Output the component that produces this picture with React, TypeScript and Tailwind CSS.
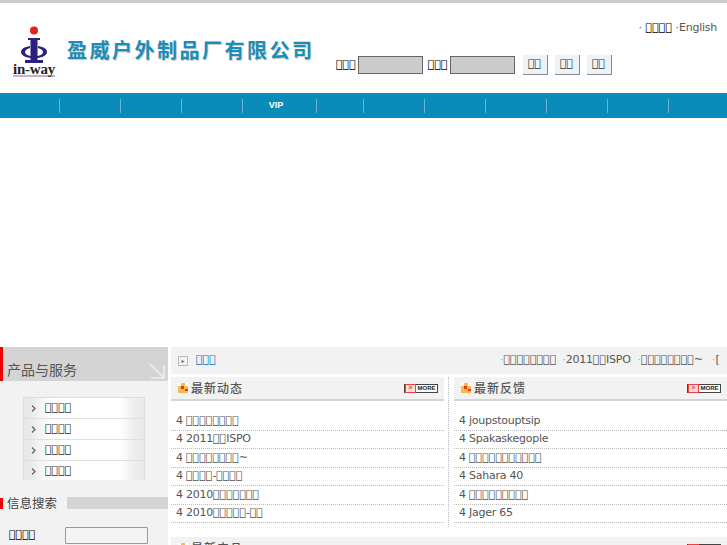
const cjk = '"Noto Sans CJK SC", sans-serif'

const navCells = [
  { w: 'w-[61px]', label: '' },
  { w: 'w-[61px]', label: '' },
  { w: 'w-[61px]', label: '' },
  { w: 'w-[74px]', label: 'VIP' },
  { w: 'w-[47px]', label: '' },
  { w: 'w-[61px]', label: '' },
  { w: 'w-[61px]', label: '' },
  { w: 'w-[61px]', label: '' },
  { w: 'w-[61px]', label: '' },
  { w: 'w-[61px]', label: '' },
  { w: 'w-[59px]', label: '' },
]
const news = ['4 \uE000\uE000\uE000\uE000\uE000\uE000\uE000\uE000', '4 2011\uE000\uE000ISPO', '4 \uE000\uE000\uE000\uE000\uE000\uE000\uE000\uE000~', '4 \uE000\uE000\uE000\uE000-\uE000\uE000\uE000\uE000', '4 2010\uE000\uE000\uE000\uE000\uE000\uE000\uE000', '4 2010\uE000\uE000\uE000\uE000\uE000-\uE000\uE000']
const feedback = ['4 joupstouptsip', '4 Spakaskegople', '4 \uE000\uE000\uE000\uE000\uE000\uE000\uE000\uE000\uE000\uE000\uE000', '4 Sahara 40', '4 \uE000\uE000\uE000\uE000\uE000\uE000\uE000\uE000\uE000', '4 Jager 65']

// latin runs sit a little tighter than the box glyphs in the reference
function Tight({ text }: { text: string }) {
  return (
    <span>
      {text.split(/(\uE000+)/).map((part, i) =>
        part.startsWith('\uE000') ? <span key={i}>{part}</span> : <span key={i} className="tracking-[-0.25px]">{part}</span>,
      )}
    </span>
  )
}

function Logo() {
  return (
    <div className="flex w-[42px] flex-col items-center">
      <svg width="26" height="37" viewBox="0 0 26 37">
        <circle cx="13" cy="4.500" r="4" fill="#e2231a" />
        <path d="M7 12h12v2h-2.500v21h-7V14H7z" fill="#2b1f80" />
        <path d="M9 20C3 21 0 23 0 26s4 5.500 10 6v-2c-4-.5-6-2-6-4s2-3 5-4zM17 20c6 1 9 3 9 6s-4 5.500-10 6v-2c4-.5 6-2 6-4s-2-3-5-4z" fill="#2b1f80" />
        <path d="M4 34h18v3H4z" fill="#2b1f80" />
      </svg>
      <span className="border-b-2 border-[#c8b0c8] font-['Liberation_Serif',serif] text-[15px] leading-[12px] font-bold tracking-[-0.2px] whitespace-nowrap text-[#222]">in-way</span>
    </div>
  )
}

function Field() {
  return <span className="h-[18px] w-[65px] border border-[#666] bg-[#ccc]" />
}

function SmallBtn() {
  return (
    <button className="flex h-[20px] w-[25px] items-center justify-center border-r border-b border-[#888] bg-[#eef3f8] text-[11px] text-[#333]">{'\uE000\uE000'}</button>
  )
}

function PanelHead({ title }: { title: string }) {
  return (
    <div className="flex h-[24px] items-center border-b-2 border-[#d4d4d4] bg-[#f2f2f2] pr-[6px] pl-[7px]">
      <svg width="10" height="10" viewBox="0 0 10 10" className="shrink-0">
        <rect width="10" height="10" fill="#f7a823" opacity="0.75" />
        <path d="M0 0h3v3H0zM7 0h3v3H7zM3 3h1v1H3z" fill="#fff" />
        <path d="M3 3h3v3H3zM7 6h3v2H7z" fill="#e8381a" />
      </svg>
      <span className="ml-[3px] text-[12px] font-medium tracking-[1px] text-[#555]" style={{ fontFamily: cjk }}>{title}</span>
      <span className="ml-auto flex h-[9px] w-[34px] items-center border border-[#444] bg-white">
        <span className="flex h-[9px] w-[11px] items-center justify-center border border-[#f04040] bg-[#fdd] text-[8px] leading-none text-[#e02020]">»</span>
        <span className="flex-1 text-center font-['Liberation_Sans',sans-serif] text-[6px] leading-none font-bold text-[#222]">MORE</span>
      </span>
    </div>
  )
}

function ListPanel({ title, rows }: { title: string; rows: string[] }) {
  return (
    <div className="w-[273px]">
      <PanelHead title={title} />
      <ul className="pt-[11px]">
        {rows.map((r, i) => (
          <li key={i} className="flex h-[18.500px] items-center border-b border-dotted border-[#bbb] pl-[5px] text-[11px] text-[#555]">
            <Tight text={r} />
          </li>
        ))}
      </ul>
    </div>
  )
}

export default function App() {
  return (
    <div className="h-[545px] w-[727px] overflow-hidden bg-white font-['DejaVu_Sans',sans-serif] text-[11px]">
      <div className="h-[3px] bg-[#ccc]" />

      <header className="flex h-[90px]">
        <div className="flex w-[335px] items-center pt-[7px] pl-[13px]">
          <Logo />
          <span className="mt-[-3px] ml-[12px] text-[20px] font-bold tracking-[2.500px] whitespace-nowrap text-[#1a8db8] [text-shadow:1px_1px_0_#ccc]" style={{ fontFamily: cjk }}>盈威户外制品厂有限公司</span>
        </div>
        <div className="flex flex-1 flex-col">
          <div className="flex h-[52px] items-start justify-end pt-[17px] pr-[10px] text-[11px] text-[#555]">
            <span>·&nbsp;<span className="text-black">{'\uE000\uE000\uE000\uE000'}</span> ·<span className="tracking-[-0.25px]">English</span></span>
          </div>
          <div className="flex items-center pl-[1px] text-[11px] text-black">
            <span className="mr-[2px]">{'\uE000\uE000\uE000'}</span>
            <Field />
            <span className="mr-[2px] ml-[5px]">{'\uE000\uE000\uE000'}</span>
            <Field />
            <div className="ml-[8px] flex gap-[7px]">
              <SmallBtn />
              <SmallBtn />
              <SmallBtn />
            </div>
          </div>
        </div>
      </header>

      <nav className="flex h-[25px] items-center bg-[#0a8cba] pl-[59px]">
        {navCells.map((c, i) => (
          <div key={i} className={`flex h-[14px] shrink-0 items-center justify-center border-l border-[#6bb5d3] pr-[7px] font-['Liberation_Sans',sans-serif] text-[9px] font-bold text-white ${c.w}`}>{c.label}</div>
        ))}
      </nav>

      <div className="h-[229px]" />

      <main className="flex">
        <aside className="h-[198px] w-[168px] shrink-0 bg-[#f2f2f2]">
          <div className="relative flex h-[34px] items-end border-l-[3px] border-[#f00000] bg-[#d4d4d4] pb-[2px] pl-[4px]">
            <span className="text-[14px] leading-[20px] text-[#555]" style={{ fontFamily: cjk }}>产品与服务</span>
            <svg width="16" height="16" viewBox="0 0 16 16" className="absolute right-[3px] bottom-[2px]" fill="none" stroke="#eee" strokeWidth="1.500">
              <path d="M1 1l14 14M15 2v13H2" />
            </svg>
          </div>

          <ul className="mx-[23px] mt-[16px] h-[83px] w-[122px] overflow-hidden border-x border-t border-[#ddd]">
            {[0, 1, 2, 3].map((i) => (
              <li key={i} className="flex h-[21px] items-center border-b border-[#e0e0e0] bg-[linear-gradient(90deg,#e8e8e8_4%,#f4f4f4_14%,#fff_24%,#fff_80%,#f0f0f0_90%,#e8e8e8_100%)] pl-[7px] text-[11px] text-[#333]">
                <svg width="6" height="7" viewBox="0 0 6 7" className="mr-[8px] shrink-0" fill="none" stroke="#666" strokeWidth="1.300">
                  <path d="M1 .5l3 3-3 3" />
                </svg>
                <span>{'\uE000\uE000\uE000\uE000'}</span>
              </li>
            ))}
          </ul>

          <div className="mt-[17px] flex h-[12px] items-center">
            <span className="h-[11px] w-[3px] bg-[#f00000]" />
            <span className="ml-[4px] text-[12.500px] whitespace-nowrap text-[#444]" style={{ fontFamily: cjk }}>信息搜索</span>
            <span className="ml-[10px] h-[12px] flex-1 bg-[#d4d4d4]" />
          </div>

          <div className="mt-[18px] flex items-center pl-[9px] text-[11px] text-black">
            <span className="w-[56px]">{'\uE000\uE000\uE000\uE000'}</span>
            <span className="h-[17px] w-[83px] rounded-[1px] border border-[#999] bg-[#f4f4f4]" />
          </div>
        </aside>

        <section className="ml-[3px] flex-1">
          <div className="flex h-[27px] items-center bg-[#f2f2f2] pl-[7px]">
            <span className="flex h-[10px] w-[10px] items-center justify-center border border-[#bbb] text-[6px] text-[#666]">▸</span>
            <span className="ml-[8px] w-[304px] text-[11px] text-[#0a6fd0]">{'\uE000\uE000\uE000'}</span>
            <span className="text-[11px] whitespace-nowrap text-[#555]">
              <span className="text-[#b5c040]">·</span><span>{'\uE000\uE000\uE000\uE000\uE000\uE000\uE000\uE000'}</span>
              <span className="ml-[6px] text-[#b5c040]">·</span><Tight text={'2011\uE000\uE000ISPO'} />
              <span className="ml-[7px] text-[#b5c040]">·</span><span>{'\uE000\uE000\uE000\uE000\uE000\uE000\uE000\uE000'}~</span>
              <span className="ml-[9px] text-[#b5c040]">·</span><span>[</span>
            </span>
          </div>

          <div className="mt-[3px] flex">
            <ListPanel title="最新动态" rows={news} />
            <div className="ml-[4px] h-[150px] border-l border-dotted border-[#bbb]" />
            <div className="ml-[5px]">
              <ListPanel title="最新反馈" rows={feedback} />
            </div>
          </div>

          <div className="mt-[10px]">
            <PanelHead title="最新产品" />
          </div>
        </section>
      </main>
    </div>
  )
}
